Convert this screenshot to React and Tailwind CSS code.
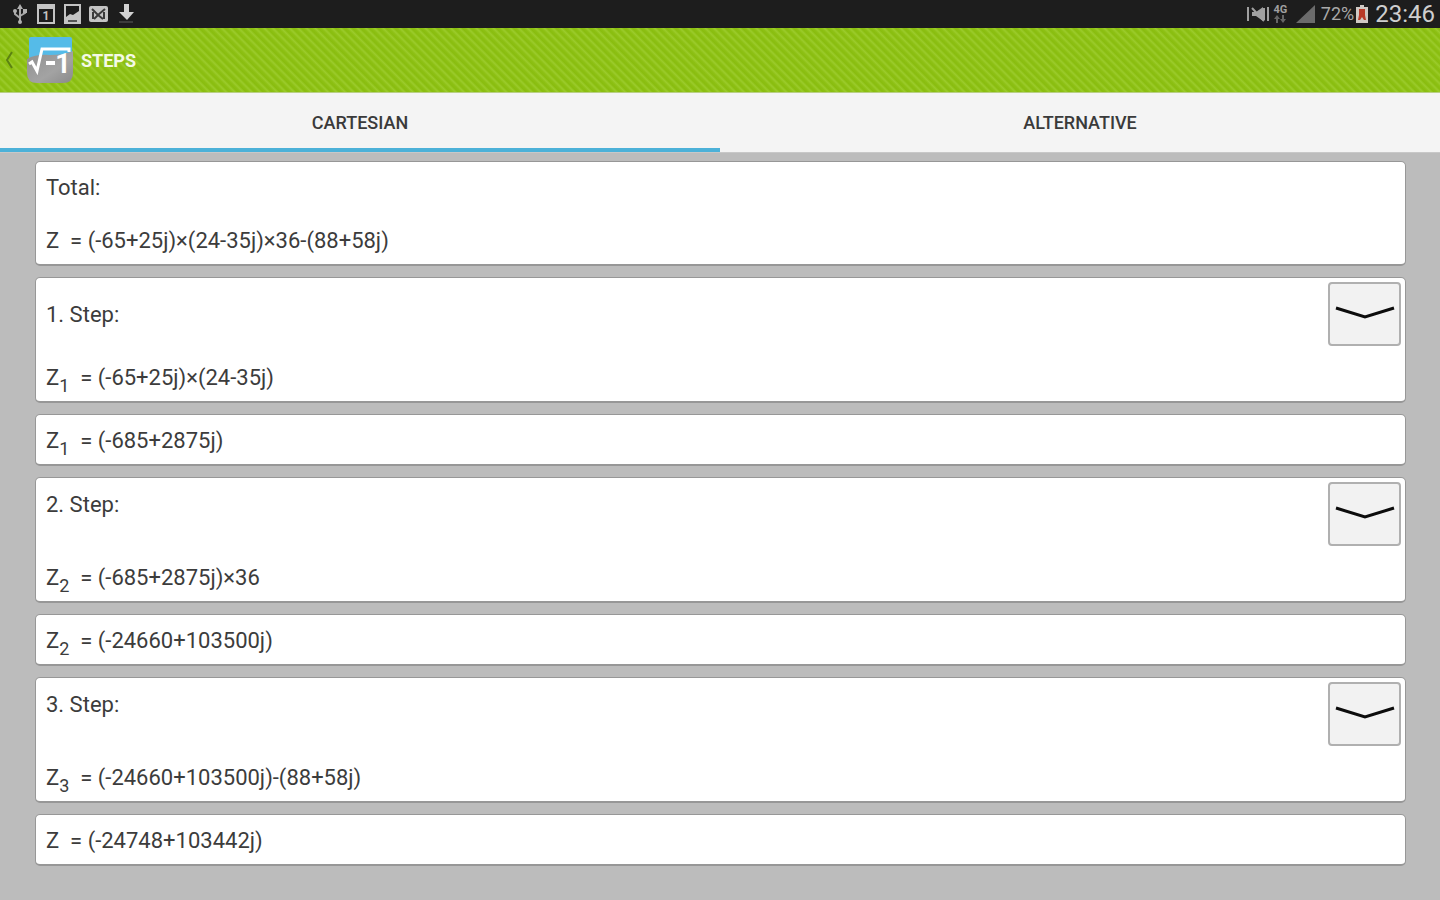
import React, { useState } from "react";

const steps = [
  { title: "1. Step:", sub: "1", expr: "(-65+25j)×(24-35j)", result: "(-685+2875j)", center: true },
  { title: "2. Step:", sub: "2", expr: "(-685+2875j)×36", result: "(-24660+103500j)" },
  { title: "3. Step:", sub: "3", expr: "(-24660+103500j)-(88+58j)", result: "(-24748+103442j)", last: true },
];

const Card = ({ className = "", children }) => (
  <section
    className={`rounded-[5px] border border-[#979797] border-b-2 bg-white pl-[10px] ${className}`}
  >
    {children}
  </section>
);

const Equation = ({ sub, value }) => (
  <p className="whitespace-pre leading-[26px]">
    Z
    {sub && <sub className="bottom-[-7px] text-lg leading-none">{sub}</sub>}
    {"  = "}
    {value}
  </p>
);

const StatusBar = () => (
  <div className="flex h-7 items-center justify-between bg-[#1d1d1d] pl-[11px] pr-[5px] text-[#c4c4c4]">
    <div className="flex items-center gap-[7px]">
      {/* usb */}
      <svg width="18" height="22" viewBox="0 0 18 22" fill="none" stroke="#a8a8a8" strokeWidth="2">
        <path d="M9 3v17M4 8v3l5 4M14 7v3l-5 3" />
        <path d="M9 1l3 5H6z" fill="#b0b0b0" stroke="none" />
        <circle cx="4" cy="8" r="2" fill="#b0b0b0" stroke="none" />
        <path d="M12 6h4v4h-4z" fill="#b0b0b0" stroke="none" />
        <circle cx="9" cy="19" r="2" fill="#b0b0b0" stroke="none" />
      </svg>
      {/* calendar */}
      <svg width="20" height="22" viewBox="0 0 20 22">
        <path d="M1 1h18v5H1z" fill="#c4c4c4" />
        <path d="M2 3h16v17H2z" fill="none" stroke="#c4c4c4" strokeWidth="2" />
        <text x="10" y="17" textAnchor="middle" fontSize="12" fontWeight="700" fontFamily="Roboto, sans-serif" fill="#c4c4c4">
          1
        </text>
      </svg>
      {/* picture */}
      <svg width="19" height="22" viewBox="0 0 19 22" fill="none" stroke="#c4c4c4" strokeWidth="2">
        <path d="M2 2h15v13H2z" />
        <path d="M3 14l4-3 3 1 6-4v6z" fill="#c4c4c4" stroke="none" />
        <path d="M1 16h17v5H1z" fill="#c4c4c4" stroke="none" />
        <path d="M5 18h9" stroke="#555" />
      </svg>
      {/* mail */}
      <svg width="19" height="22" viewBox="0 0 19 22">
        <rect x="0" y="3" width="19" height="16" rx="2" fill="#c4c4c4" />
        <path d="M3 6l6 6 7-6M4 9v7M15 9v7M5 16l4-4 5 4" fill="none" stroke="#3a3a3a" strokeWidth="2" />
      </svg>
      {/* download */}
      <svg className="ml-[2px]" width="18" height="22" viewBox="0 0 18 22" fill="#d2d2d2">
        <path d="M7 1h5v8h5l-7 8-8-8h5z" />
        <path d="M2 18h14v2H2z" fill="#3c3c3c" />
      </svg>
    </div>
    <div className="flex items-center">
      {/* muted */}
      <svg width="24" height="20" viewBox="0 0 24 20" fill="none" stroke="#a0a0a0" strokeWidth="2">
        <path d="M2 3v14M22 3v14M6 4l12 13M18 4v12" />
        <path d="M6 8h4l7-5v14l-7-5H6z" fill="#a0a0a0" stroke="none" />
      </svg>
      <div className="ml-[2px] flex w-[17px] flex-col items-center">
        <span className="text-[11px] font-bold leading-[10px] text-[#a0a0a0]">4G</span>
        <svg width="12" height="8" viewBox="0 0 12 8" fill="#666">
          <path d="M0 4l3-4 3 4H4v4H2V4zM6 4h2V0h2v4h2L9 8z" />
        </svg>
      </div>
      <svg className="ml-[6px]" width="20" height="20" viewBox="0 0 20 20">
        <path d="M20 1v18H1z" fill="#6b6b6b" />
      </svg>
      <span className="ml-[6px] text-lg leading-7 text-[#a9a9a9]">72%</span>
      {/* battery */}
      <svg className="ml-[1px]" width="14" height="20" viewBox="0 0 14 20">
        <path d="M5 1h4v2h4v16H1V3h4z" fill="#d0c9c4" />
        <path d="M4 5h6v6l1 5H9l-2-3-2 3H3l1-5z" fill="#b93a28" />
      </svg>
      <span className="ml-[6px] text-2xl leading-7 text-[#cfcfcf]">23:46</span>
    </div>
  </div>
);

const Logo = () => (
  <svg width="48" height="50" viewBox="0 0 48 50">
    <defs>
      <linearGradient id="logoGray" x1="0" y1="0" x2="1" y2="1">
        <stop offset="0" stopColor="#8f8f8f" />
        <stop offset="0.6" stopColor="#a3a3a3" />
        <stop offset="1" stopColor="#8a8a8a" />
      </linearGradient>
    </defs>
    <rect x="3" y="2" width="43" height="30" rx="2" fill="#55bbe8" />
    <path d="M1 24Q10 19 24 20Q38 20 47 16V38Q47 48 37 48H11Q1 48 1 38Z" fill="url(#logoGray)" />
    <path d="M3 29l3-2 5 9L16 14H43v3" fill="none" stroke="#fff" strokeWidth="3" />
    <path d="M20 28h9" stroke="#fff" strokeWidth="4" />
    <text x="37" y="38" textAnchor="middle" fontSize="27" fontWeight="700" fontFamily="Roboto, sans-serif" fill="#fff">
      1
    </text>
  </svg>
);

const ActionBar = () => (
  <header className="h-[65px] border-b border-[#b9cf85] bg-[repeating-linear-gradient(45deg,#89bd0f_0px,#8dc014_2px,#9bcb2b_4px,#89bd0f_6px)]">
    <button className="flex h-full items-center" aria-label="Back to calculator">
      <svg className="ml-[5px]" width="8" height="18" viewBox="0 0 8 18" fill="none" stroke="#5c8212" strokeWidth="2">
        <path d="M7 1L2 9l5 8" />
      </svg>
      <span className="ml-[13px]">
        <Logo />
      </span>
      <span className="ml-[7px] pt-[2px] text-lg font-bold text-[#f4f9e6]">STEPS</span>
    </button>
  </header>
);

const Tabs = ({ active, onChange }) => (
  <nav className="flex h-[60px] border-b border-[#c8c8c8] bg-[#f4f4f4]" role="tablist">
    {["CARTESIAN", "ALTERNATIVE"].map((tab) => (
      <button
        key={tab}
        role="tab"
        aria-selected={active === tab}
        onClick={() => onChange(tab)}
        className={`flex-1 border-b-4 pt-1 text-lg font-medium text-[#3a3a3a] ${
          active === tab ? "border-[#4cb1d8]" : "border-transparent"
        }`}
      >
        {tab}
      </button>
    ))}
  </nav>
);

const ExpandButton = ({ label }) => (
  <button
    aria-label={label}
    className="mr-1 mt-1 flex h-16 w-[73px] justify-center rounded-[4px] border-2 border-[#b0b0b0] bg-[#f2f2f2] pt-[21px]"
  >
    <svg width="60" height="16" viewBox="0 0 60 16" fill="none" stroke="#0c0c0c" strokeWidth="3">
      <path d="M1 3l29 9 29-9" />
    </svg>
  </button>
);

export default function App() {
  const [tab, setTab] = useState("CARTESIAN");

  return (
    <div className="min-h-screen bg-[#bcbcbc] font-[Roboto,sans-serif] text-[22px] text-[#3c3c3c]">
      <StatusBar />
      <ActionBar />
      <Tabs active={tab} onChange={setTab} />

      <main className="flex flex-col gap-[11px] pb-8 pl-[35px] pr-[34px] pt-2">
        <Card className="flex h-[105px] flex-col justify-between pb-[10px] pt-[13px]">
          <h2 className="leading-[26px]">Total:</h2>
          <Equation value="(-65+25j)×(24-35j)×36-(88+58j)" />
        </Card>

        {steps.map((step) => (
          <React.Fragment key={step.title}>
            <Card className="flex h-[126px] justify-between">
              <div
                className={`flex flex-col justify-between pb-[10px] ${
                  step.center ? "pt-6" : "pt-[14px]"
                }`}
              >
                <h2 className="leading-[26px]">{step.title}</h2>
                <Equation sub={step.sub} value={step.expr} />
              </div>
              <ExpandButton label={`Show details of ${step.title}`} />
            </Card>
            <Card className="flex h-[52px] items-center pt-[2px]">
              <Equation sub={step.last ? null : step.sub} value={step.result} />
            </Card>
          </React.Fragment>
        ))}
      </main>
    </div>
  );
}
